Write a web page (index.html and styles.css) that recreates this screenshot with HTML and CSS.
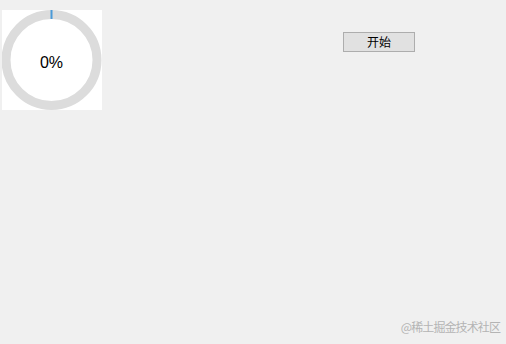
FILE: index.html
```html
<!DOCTYPE html>
<html lang="zh-CN">
<head>
  <meta charset="UTF-8">
  <title>进度</title>
  <link rel="stylesheet" href="styles.css">
</head>
<body>
  <div class="window">
    <div class="gauge">
      <svg width="100" height="100" viewBox="0 0 100 100">
        <circle cx="49.5" cy="50" r="45.5" fill="none" stroke="#dcdcdc" stroke-width="9"/>
        <rect x="48.5" y="0" width="2" height="9" fill="#4a9ad8"/>
      </svg>
      <span class="gauge-text">0%</span>
    </div>
    <button class="start-btn">开始</button>
  </div>
  <div class="watermark">@稀土掘金技术社区</div>
</body>
</html>
```

FILE: styles.css
```css
html, body {
  margin: 0;
  padding: 0;
  height: 100%;
}

body {
  background: #f0f0f0;
  font-family: "Liberation Sans", "Noto Sans CJK SC", sans-serif;
  position: relative;
  overflow: hidden;
}

.window {
  display: flex;
  align-items: flex-start;
  padding: 10px 0 0 2px;
}

.gauge {
  position: relative;
  width: 100px;
  height: 100px;
  background: #fff;
}

.gauge svg {
  display: block;
}

.gauge-text {
  position: absolute;
  top: 5px;
  left: 0;
  right: 1px;
  bottom: 0;
  display: flex;
  align-items: center;
  justify-content: center;
  font-size: 16px;
  color: #000;
}

.start-btn {
  margin: 22px 0 0 241px;
  width: 72px;
  height: 20px;
  padding: 0;
  background: #e1e1e1;
  border: 1px solid #adadad;
  border-radius: 0;
  font-family: "Noto Sans CJK SC", sans-serif;
  font-size: 12px;
  line-height: 18px;
  color: #000;
}

.watermark {
  position: absolute;
  right: 6px;
  bottom: 9px;
  font-family: "Noto Sans CJK SC", sans-serif;
  font-size: 12px;
  color: #b4b4b4;
  letter-spacing: -0.9px;
}
```
